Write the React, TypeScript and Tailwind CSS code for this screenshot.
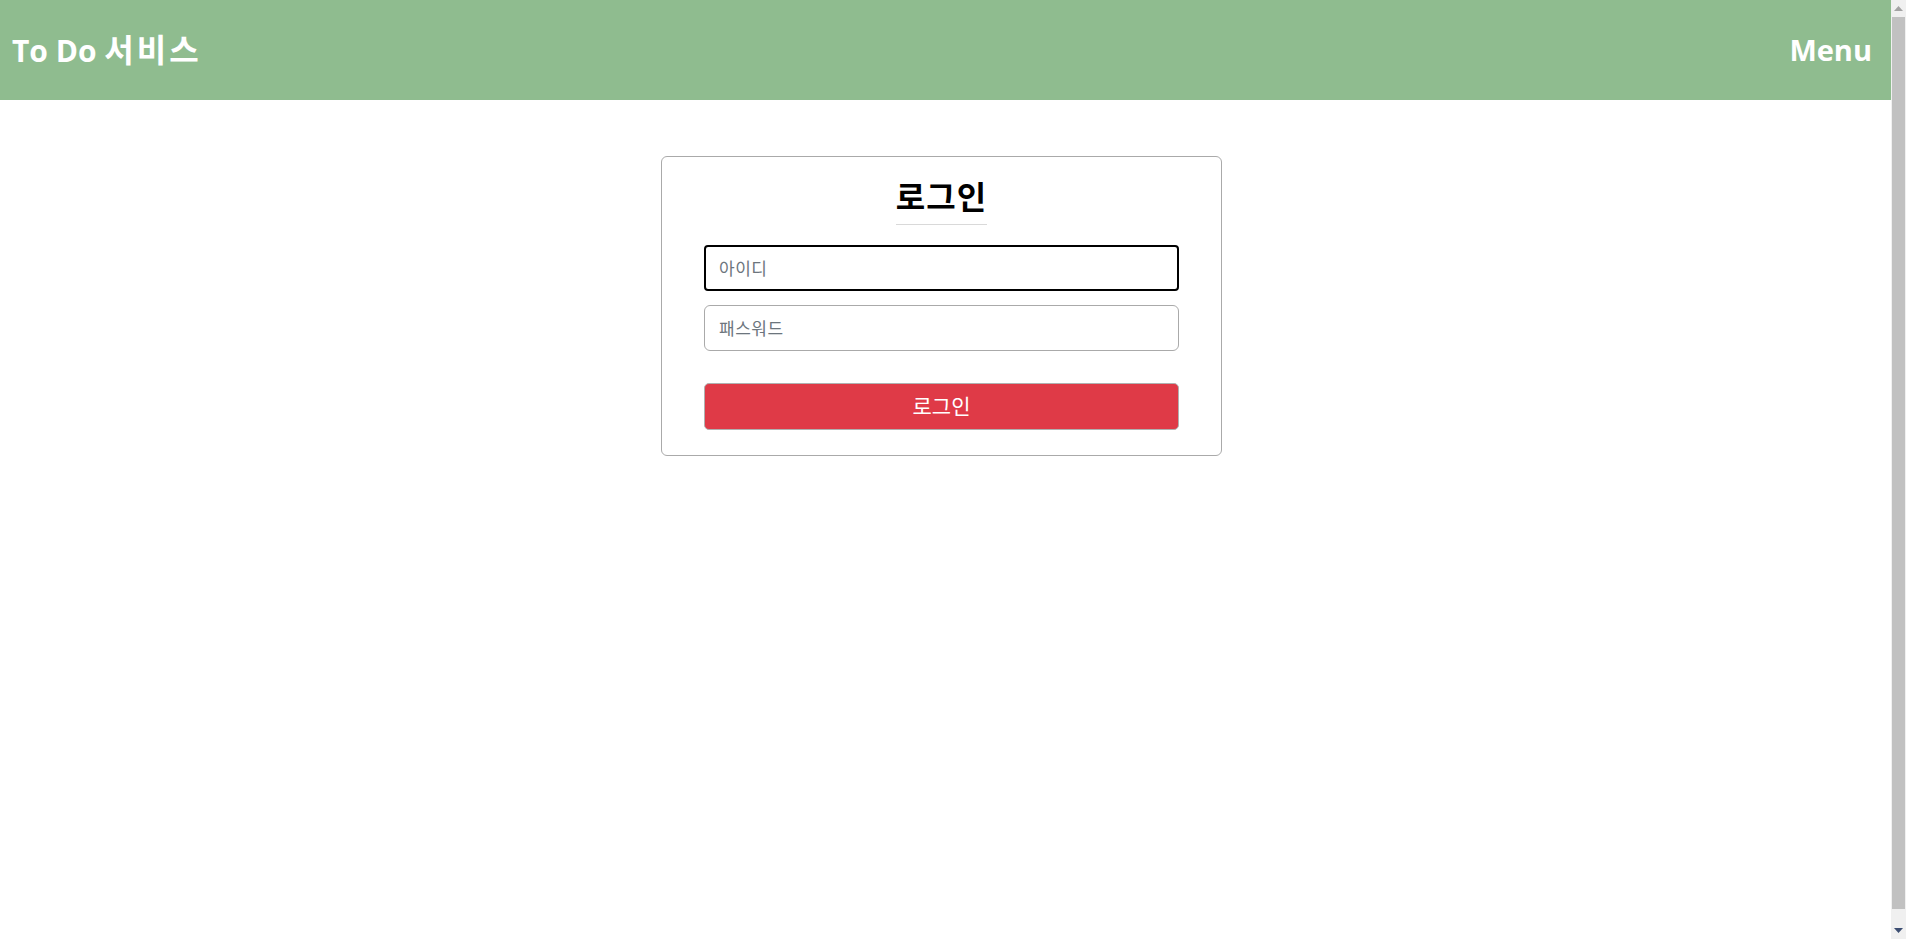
export default function App() {
  const font = { fontFamily: '"Open Sans", "Noto Sans CJK KR", sans-serif' };
  return (
    <div className="h-screen flex overflow-hidden bg-white" style={font}>
      <div className="flex-1 min-w-0">
        <header className="h-[100px] bg-[#8fbc8f] flex items-center justify-between pl-[12px] pr-[19px]">
          <h1 className="text-[30px] font-bold text-white">
            To Do <span className="text-[32px] tracking-[3px]">서비스</span>
          </h1>
          <span className="text-[29px] font-bold text-white">Menu</span>
        </header>

        <main className="flex justify-center pt-[56px] pr-[8px]">
          <div className="w-[561px] h-[300px] border border-[#aaaaaa] rounded-[6px] px-[42px] flex flex-col">
            <div className="flex justify-center pt-[20px]">
              <h2 className="text-[32px] leading-[40px] font-bold text-black border-b border-[#d9d9d9] pb-[7px] tracking-[1px]">
                로그인
              </h2>
            </div>
            <input
              className="mt-[20px] h-[46px] w-full rounded-[4px] border-2 border-black px-[13px] text-[17px] tracking-[0.5px] outline-none placeholder:text-[#6c757d]"
              placeholder="아이디"
            />
            <input
              type="password"
              className="mt-[14px] h-[46px] w-full rounded-[6px] border border-[#aaaaaa] px-[14px] text-[17px] tracking-[0.5px] outline-none placeholder:text-[#6c757d]"
              placeholder="패스워드"
            />
            <button className="mt-[32px] h-[47px] w-full rounded-[5px] border border-[#b0b0b0] bg-[#df3a47] text-white text-[21px]">
              로그인
            </button>
          </div>
        </main>
      </div>

      <div className="w-[15px] bg-[#f0f0f0] flex flex-col items-center">
        <div className="h-[17px] flex items-center justify-center">
          <svg width="9" height="5" viewBox="0 0 9 5">
            <path d="M0 5 L4.5 0 L9 5 Z" fill="#a3a3a3" />
          </svg>
        </div>
        <div className="w-[13px] flex-1 bg-[#c1c1c1] mb-[13px]" />
        <div className="h-[17px] flex items-center justify-center">
          <svg width="9" height="5" viewBox="0 0 9 5">
            <path d="M0 0 L4.5 5 L9 0 Z" fill="#3c4e72" />
          </svg>
        </div>
      </div>
    </div>
  );
}
